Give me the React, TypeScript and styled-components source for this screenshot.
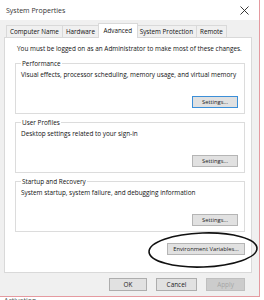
import React from "react";
import styled, { createGlobalStyle } from "styled-components";

const GlobalStyle = createGlobalStyle`
  html, body {
    margin: 0;
    padding: 0;
    background: #ffffff;
  }
  body {
    font-family: "Open Sans", "Liberation Sans", sans-serif;
    width: 264px;
    height: 300px;
    overflow: hidden;
  }
`;

const tabs = ["Computer Name", "Hardware", "Advanced", "System Protection", "Remote"];

type GroupProps = {
  title: string;
  text: string;
  focused?: boolean;
};

function Group({ title, text, focused }: GroupProps) {
  return (
    <ScGroup>
      <ScLegend>{title}</ScLegend>
      <ScText>{text}</ScText>
      <ScGroupFooter>
        <ScButton $w={46} $focused={focused}>
          Settings...
        </ScButton>
      </ScGroupFooter>
    </ScGroup>
  );
}

export default function App() {
  return (
    <>
      <GlobalStyle />
      <ScScreen>
        <ScWindow>
          <ScTitleBar>
            <ScTitle>System Properties</ScTitle>
            <ScClose>
              <svg width="9" height="9" viewBox="0 0 9 9">
                <path d="M0.5 0.5 L8.5 8.5 M8.5 0.5 L0.5 8.5" stroke="#222" strokeWidth="0.9" />
              </svg>
            </ScClose>
          </ScTitleBar>
          <ScBody>
            <ScTabs>
              {tabs.map((t) => (
                <ScTab key={t} $active={t === "Advanced"}>
                  {t}
                </ScTab>
              ))}
            </ScTabs>
            <ScPanel>
              <ScNotice>
                You must be logged on as an Administrator to make most of these changes.
              </ScNotice>
              <Group
                title="Performance"
                text="Visual effects, processor scheduling, memory usage, and virtual memory"
                focused
              />
              <Group title="User Profiles" text="Desktop settings related to your sign-in" />
              <Group
                title="Startup and Recovery"
                text="System startup, system failure, and debugging information"
              />
              <ScEnvRow>
                <ScEnvWrap>
                  <ScButton $w={78}>Environment Variables...</ScButton>
                  <ScCircle width="112" height="38" viewBox="0 0 112 38">
                    <ellipse
                      cx="56"
                      cy="19"
                      rx="54"
                      ry="17"
                      fill="none"
                      stroke="#111"
                      strokeWidth="1.6"
                      transform="rotate(-2 56 19)"
                    />
                  </ScCircle>
                </ScEnvWrap>
              </ScEnvRow>
            </ScPanel>
            <ScFooter>
              <ScDialogButton $w={38}>OK</ScDialogButton>
              <ScDialogButton $w={41}>Cancel</ScDialogButton>
              <ScDialogButton $w={39} $disabled>
                Apply
              </ScDialogButton>
            </ScFooter>
          </ScBody>
        </ScWindow>
        <ScActivation>Activation</ScActivation>
      </ScScreen>
    </>
  );
}

const ScScreen = styled.div`
  width: 264px;
  height: 300px;
  overflow: hidden;
  background: #ffffff;
`;

const ScWindow = styled.div`
  width: 260px;
  height: 297px;
  box-sizing: border-box;
  border-right: 1px solid #e59aa0;
  border-bottom: 1px solid #e59aa0;
  display: flex;
  flex-direction: column;
`;

const ScTitleBar = styled.div`
  height: 20px;
  background: #ffffff;
  display: flex;
  align-items: center;
  justify-content: space-between;
  padding: 0 7px 0 6px;
`;

const ScTitle = styled.div`
  font-size: 7px;
  color: #333;
  padding-top: 1px;
`;

const ScClose = styled.div`
  display: flex;
  align-items: center;
  margin-right: 3px;
`;

const ScBody = styled.div`
  flex: 1;
  background: #f0f0f0;
  padding: 3px 7px 0 4px;
  display: flex;
  flex-direction: column;
`;

const ScTabs = styled.div`
  display: flex;
  align-items: flex-end;
  height: 15px;
  padding-left: 3px;
`;

const ScTab = styled.div<{ $active?: boolean }>`
  font-size: 6.3px;
  color: #111;
  height: ${(p) => (p.$active ? "15px" : "13px")};
  line-height: ${(p) => (p.$active ? "14px" : "12px")};
  padding: 0 ${(p) => (p.$active ? "4.5px" : "3px")};
  margin: 0 ${(p) => (p.$active ? "-1px" : "0")};
  background: ${(p) => (p.$active ? "#ffffff" : "#f0f0f0")};
  border: 1px solid #d9d9d9;
  border-bottom: ${(p) => (p.$active ? "none" : "1px solid #d9d9d9")};
  margin-left: -1px;
  position: relative;
  z-index: ${(p) => (p.$active ? 2 : 1)};
  box-sizing: border-box;
  white-space: nowrap;
`;

const ScPanel = styled.div`
  background: #ffffff;
  border: 1px solid #d9d9d9;
  margin-top: -1px;
  height: 236px;
  box-sizing: border-box;
  padding: 6px 6px 0 10px;
  display: flex;
  flex-direction: column;
`;

const ScNotice = styled.div`
  font-size: 6.4px;
  color: #111;
  white-space: nowrap;
  margin-bottom: 10px;
  padding-left: 2px;
`;

const ScGroup = styled.div`
  border: 1px solid #dcdcdc;
  height: 51px;
  box-sizing: border-box;
  margin-bottom: 8px;
  padding: 0 6px 0 5px;
  display: flex;
  flex-direction: column;
`;

const ScLegend = styled.div`
  font-size: 6.4px;
  color: #111;
  background: #ffffff;
  align-self: flex-start;
  padding: 0 1px;
  margin-top: -5px;
  line-height: 9px;
`;

const ScText = styled.div`
  font-size: 6.4px;
  color: #111;
  margin-top: 2px;
  white-space: nowrap;
`;

const ScGroupFooter = styled.div`
  margin-top: auto;
  margin-bottom: 5px;
  display: flex;
  justify-content: flex-end;
`;

const ScButton = styled.div<{ $focused?: boolean; $w: number }>`
  font-size: 5.8px;
  color: #222;
  background: #e1e1e1;
  border: 1px solid ${(p) => (p.$focused ? "#3c8fd8" : "#b5b5b5")};
  width: ${(p) => p.$w}px;
  height: 12px;
  line-height: 11px;
  box-sizing: border-box;
  text-align: center;
  white-space: nowrap;
`;

const ScEnvRow = styled.div`
  display: flex;
  justify-content: flex-end;
  margin-top: 3px;
`;

const ScEnvWrap = styled.div`
  position: relative;
`;

const ScCircle = styled.svg`
  position: absolute;
  left: -20px;
  top: -12px;
  pointer-events: none;
`;

const ScFooter = styled.div`
  display: flex;
  justify-content: flex-end;
  gap: 9px;
  padding: 5px 7px 0 0;
`;

const ScDialogButton = styled.div<{ $disabled?: boolean; $w: number }>`
  font-size: 6.4px;
  color: ${(p) => (p.$disabled ? "#a6a6a6" : "#222")};
  background: ${(p) => (p.$disabled ? "#cccccc" : "#e1e1e1")};
  border: 1px solid ${(p) => (p.$disabled ? "#bfbfbf" : "#adadad")};
  width: ${(p) => p.$w}px;
  height: 13px;
  line-height: 12px;
  box-sizing: border-box;
  text-align: center;
`;

const ScActivation = styled.div`
  font-size: 7px;
  color: #555;
  padding-left: 4px;
  line-height: 8px;
`;
